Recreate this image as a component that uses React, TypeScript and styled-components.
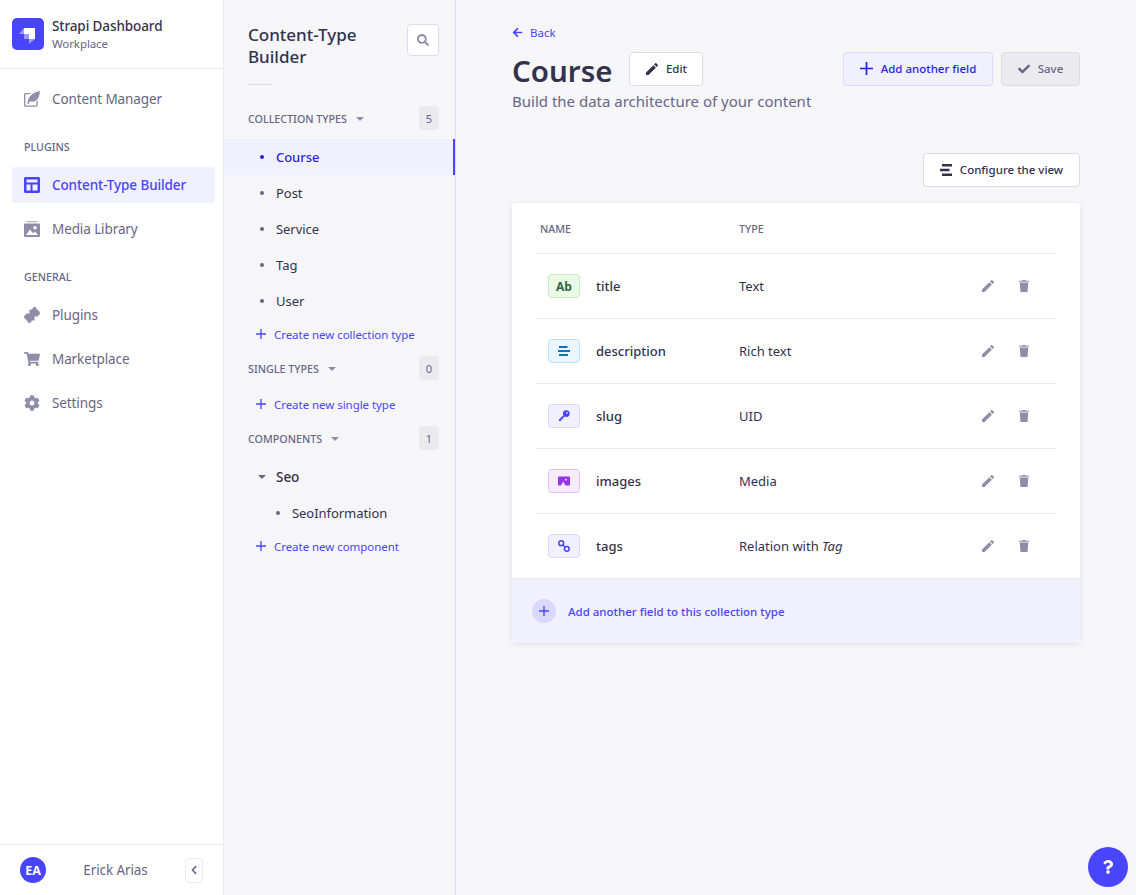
import React from 'react';
import styled, { createGlobalStyle } from 'styled-components';
import {
  FaArrowLeft,
  FaCheck,
  FaChevronLeft,
  FaCog,
  FaQuestion,
  FaSearch,
  FaShoppingCart,
} from 'react-icons/fa';

const theme = {
  primary: '#4945ff',
  primaryDark: '#271fe0',
  primaryLight: '#f0f0ff',
  border: '#dcdce4',
  line: '#eaeaef',
  bg: '#f6f6f9',
  text: '#32324d',
  muted: '#666687',
  icon: '#8e8ea9',
};

const GlobalStyle = createGlobalStyle`
  html, body {
    margin: 0;
    padding: 0;
    background: ${theme.bg};
  }
  * {
    box-sizing: border-box;
  }
  body {
    font-family: "Noto Sans", "Open Sans", sans-serif;
    color: ${theme.text};
  }
`;

const Page = styled.div`
  display: flex;
  height: 895px;
  overflow: hidden;
`;

const MainNav = styled.nav`
  width: 224px;
  flex-shrink: 0;
  display: flex;
  flex-direction: column;
  background: #fff;
  border-right: 1px solid ${theme.line};
`;

const Brand = styled.div`
  height: 69px;
  display: flex;
  align-items: center;
  gap: 8px;
  padding: 0 12px;
  border-bottom: 1px solid ${theme.line};
`;

const BrandName = styled.div`
  font-size: 13.5px;
  font-weight: 500;
  line-height: 18px;
  letter-spacing: -0.1px;
`;

const BrandSub = styled.div`
  font-size: 11.5px;
  line-height: 17px;
  color: ${theme.muted};
  letter-spacing: -0.1px;
`;

const NavBody = styled.div`
  flex: 1;
  padding: 12px 8px 0 12px;
`;

const NavLabel = styled.div`
  height: 16px;
  line-height: 16px;
  margin: 22px 0 12px 12px;
  font-size: 10.7px;
  font-weight: 500;
  color: ${theme.muted};
`;

const NavItem = styled.div<{ $active?: boolean }>`
  height: 36px;
  display: flex;
  align-items: center;
  gap: 12px;
  padding: 0 12px;
  margin-bottom: 8px;
  border-radius: 4px;
  font-size: 13.5px;
  letter-spacing: -0.1px;
  font-weight: ${(p) => (p.$active ? 500 : 400)};
  color: ${(p) => (p.$active ? theme.primary : theme.muted)};
  background: ${(p) => (p.$active ? theme.primaryLight : 'transparent')};
  svg {
    width: 16px;
    height: 16px;
    flex-shrink: 0;
    color: ${(p) => (p.$active ? theme.primary : theme.icon)};
  }
`;

const NavFooter = styled.div`
  height: 51px;
  display: flex;
  align-items: center;
  padding: 0 20px;
  border-top: 1px solid ${theme.line};
`;

const Avatar = styled.div`
  width: 26px;
  height: 26px;
  border-radius: 50%;
  background: ${theme.primary};
  color: #fff;
  display: flex;
  align-items: center;
  justify-content: center;
  font-size: 12.5px;
  font-weight: 700;
`;

const UserName = styled.div`
  flex: 1;
  text-align: center;
  font-size: 13.5px;
  letter-spacing: -0.1px;
  color: ${theme.muted};
`;

const CollapseButton = styled.button`
  width: 18px;
  height: 25px;
  padding: 0;
  display: flex;
  align-items: center;
  justify-content: center;
  background: #fff;
  border: 1px solid ${theme.line};
  border-radius: 4px;
  color: ${theme.muted};
  svg {
    width: 10px;
    height: 10px;
  }
`;

const SubNav = styled.aside`
  width: 232px;
  flex-shrink: 0;
  background: ${theme.bg};
  border-right: 1px solid ${theme.border};
`;

const SubNavHead = styled.div`
  display: flex;
  justify-content: space-between;
  align-items: flex-start;
  padding: 24px 16px 0 24px;
`;

const SubNavTitle = styled.h2`
  margin: 0;
  font-size: 17px;
  line-height: 22px;
  font-weight: 500;
`;

const IconButton = styled.button`
  width: 32px;
  height: 32px;
  padding: 0;
  display: flex;
  align-items: center;
  justify-content: center;
  background: #fff;
  border: 1px solid ${theme.border};
  border-radius: 4px;
  color: ${theme.icon};
  svg {
    width: 12px;
    height: 12px;
  }
`;

const Divider = styled.div`
  width: 24px;
  height: 1px;
  background: ${theme.border};
  margin: 16px 0 21px 24px;
`;

const SectionHead = styled.div`
  height: 24px;
  display: flex;
  align-items: center;
  justify-content: space-between;
  padding: 0 16px 0 24px;
  margin-bottom: 9px;
`;

const SectionTitle = styled.div`
  display: flex;
  align-items: center;
  gap: 9px;
  padding-top: 1px;
  font-size: 10.7px;
  font-weight: 500;
  color: ${theme.muted};
`;

const Caret = styled.span<{ $dark?: boolean }>`
  width: 0;
  height: 0;
  border-left: 4px solid transparent;
  border-right: 4px solid transparent;
  border-top: 4px solid ${(p) => (p.$dark ? theme.muted : theme.icon)};
`;

const CountBadge = styled.div`
  width: 20px;
  height: 24px;
  display: flex;
  align-items: center;
  justify-content: center;
  border-radius: 4px;
  background: ${theme.line};
  color: ${theme.muted};
  font-size: 11px;
`;

const SubItem = styled.div<{ $active?: boolean; $nested?: boolean }>`
  height: 36px;
  display: flex;
  align-items: center;
  gap: 12px;
  padding-left: ${(p) => (p.$nested ? '52px' : '36px')};
  font-size: 13px;
  letter-spacing: -0.05px;
  font-weight: ${(p) => (p.$active ? 500 : 400)};
  color: ${(p) => (p.$active ? theme.primaryDark : theme.text)};
  background: ${(p) => (p.$active ? theme.primaryLight : 'transparent')};
  border-right: 2px solid ${(p) => (p.$active ? theme.primary : 'transparent')};
`;

const Dot = styled.span<{ $active?: boolean }>`
  width: 4px;
  height: 4px;
  border-radius: 50%;
  background: ${(p) => (p.$active ? theme.primaryDark : theme.muted)};
`;

const GroupItem = styled(SubItem)`
  padding-left: 34px;
  gap: 10px;
  font-size: 13.5px;
  font-weight: 500;
`;

const CreateLink = styled.div`
  height: 30px;
  display: flex;
  align-items: center;
  gap: 8px;
  padding-left: 32px;
  margin-bottom: 7px;
  font-size: 11.5px;
  letter-spacing: -0.05px;
  color: ${theme.primary};
  svg {
    width: 10px;
    height: 10px;
  }
`;

const Content = styled.main`
  flex: 1;
  min-width: 0;
  padding: 24px 56px 0;
`;

const BackLink = styled.div`
  height: 18px;
  display: flex;
  align-items: center;
  gap: 7px;
  padding-bottom: 2px;
  font-size: 11.5px;
  color: ${theme.primary};
  svg {
    width: 11px;
    height: 11px;
  }
`;

const HeaderRow = styled.div`
  display: flex;
  align-items: flex-start;
  justify-content: space-between;
  margin-top: 10px;
`;

const TitleRow = styled.div`
  display: flex;
  align-items: flex-start;
  gap: 17px;
`;

const PageTitle = styled.h1`
  margin: 0;
  font-size: 29.500px;
  line-height: 38px;
  font-weight: 600;
`;

const Actions = styled.div`
  display: flex;
  gap: 8px;
`;

const Button = styled.button<{ $variant?: 'default' | 'primary' | 'disabled'; $width: number }>`
  width: ${(p) => p.$width}px;
  height: 34px;
  display: flex;
  align-items: center;
  justify-content: center;
  gap: 8px;
  padding: 0 0 1px;
  border-radius: 4px;
  font-family: inherit;
  font-size: 11.5px;
  font-weight: 500;
  border: 1px solid ${(p) => (p.$variant === 'primary' ? '#d9d8ff' : theme.border)};
  background: ${(p) =>
    p.$variant === 'primary' ? theme.primaryLight : p.$variant === 'disabled' ? theme.line : '#fff'};
  color: ${(p) =>
    p.$variant === 'primary' ? theme.primaryDark : p.$variant === 'disabled' ? theme.muted : theme.text};
  svg {
    width: ${(p) => (p.$variant === 'primary' ? 13 : 12)}px;
    height: ${(p) => (p.$variant === 'primary' ? 13 : 12)}px;
    flex-shrink: 0;
  }
`;

const Subtitle = styled.div`
  font-size: 15px;
  line-height: 22px;
  color: ${theme.muted};
`;

const ConfigRow = styled.div`
  display: flex;
  justify-content: flex-end;
  margin-top: 41px;
`;

const Card = styled.section`
  margin-top: 16px;
  background: #fff;
  border-radius: 4px;
  overflow: hidden;
  box-shadow: 0 1px 4px rgba(33, 33, 52, 0.1);
`;

const TableBody = styled.div`
  padding: 0 24px;
`;

const HeadRow = styled.div`
  height: 51px;
  display: grid;
  grid-template-columns: 199px 1fr;
  align-items: center;
  padding: 2px 0 0 4px;
  border-bottom: 1px solid ${theme.line};
  font-size: 10.7px;
  font-weight: 500;
  color: ${theme.muted};
`;

const FieldRow = styled.div`
  height: 65px;
  display: grid;
  grid-template-columns: 32px 16px 139px 1fr auto;
  align-items: center;
  padding-left: 12px;
  padding-right: 27px;
  border-bottom: 1px solid ${theme.line};
  &:last-child {
    border-bottom: none;
    height: 64px;
  }
`;

const FieldBadge = styled.div<{ $bg: string; $border: string; $color: string }>`
  width: 32px;
  height: 24px;
  display: flex;
  align-items: center;
  justify-content: center;
  border-radius: 4px;
  background: ${(p) => p.$bg};
  border: 1px solid ${(p) => p.$border};
  color: ${(p) => p.$color};
  font-size: 12px;
  font-weight: 700;
  svg {
    width: 12px;
    height: 12px;
  }
`;

const FieldName = styled.div`
  grid-column: 3;
  font-size: 13px;
  font-weight: 500;
`;

const FieldType = styled.div`
  padding-left: 4px;
  font-size: 13px;
  em {
    font-style: italic;
  }
`;

const RowActions = styled.div`
  display: flex;
  gap: 25px;
  color: ${theme.icon};
  svg {
    height: 12px;
    display: block;
  }
`;

const AddRow = styled.div`
  height: 65px;
  display: flex;
  align-items: center;
  gap: 12px;
  padding-left: 20px;
  background: ${theme.primaryLight};
  border-top: 1px solid ${theme.line};
  font-size: 11.5px;
  font-weight: 500;
  color: ${theme.primary};
`;

const AddCircle = styled.span`
  width: 24px;
  height: 24px;
  border-radius: 50%;
  display: flex;
  align-items: center;
  justify-content: center;
  background: #d9d8ff;
  svg {
    width: 10px;
    height: 10px;
  }
`;

const HelpButton = styled.button`
  position: fixed;
  right: 8px;
  bottom: 8px;
  width: 40px;
  height: 40px;
  padding: 0;
  border: none;
  border-radius: 50%;
  display: flex;
  align-items: center;
  justify-content: center;
  background: ${theme.primary};
  color: #fff;
  svg {
    width: 14px;
    height: 14px;
  }
`;

const LogoIcon = () => (
  <svg width="32" height="32" viewBox="0 0 32 32" style={{ flexShrink: 0 }}>
    <rect width="32" height="32" rx="5" fill="#4945ff" />
    <path d="M12 10h11v11h-6v-5h-5z" fill="#fff" />
    <path d="M12 10v6H7z" fill="#fff" opacity="0.45" />
    <path d="M17 21h6l-6 5z" fill="#fff" opacity="0.45" />
    <path d="M12 16h5v5h-5z" fill="#fff" opacity="0.45" />
  </svg>
);

const ManagerIcon = () => (
  <svg viewBox="0 0 16 16" fill="currentColor">
    <path d="M0 3.500C0 2.700.7 2 1.500 2H7L5.800 3.300H1.500c-.1 0-.2.1-.2.2v10.700c0 .1.1.2.2.2h10.700c.1 0 .2-.1.2-.2V10h1.300v4.200c0 .8-.7 1.500-1.500 1.500H1.500c-.8 0-1.500-.7-1.500-1.500z" />
    <path d="M16 0s-.2 4.500-2 7.500c-1.400 2.300-3.700 3.500-6.500 3H5.800L4.500 13H3.300C4 7.500 6.500 1.500 16 0z" />
  </svg>
);

const LayoutIcon = () => (
  <svg viewBox="0 0 16 16" fill="currentColor">
    <path
      fillRule="evenodd"
      d="M1.500 0h13C15.300 0 16 .7 16 1.500v13c0 .8-.7 1.500-1.500 1.500h-13C.7 16 0 15.300 0 14.500v-13C0 .7.700 0 1.500 0zM2.500 2.500v3h11v-3zM2.500 7.500v6h4v-6zM8.500 7.500v6h5v-6z"
    />
  </svg>
);

const MediaIcon = () => (
  <svg viewBox="0 0 16 16" fill="currentColor">
    <path d="M2.500 0h11v1.200h-11z" opacity="0.7" />
    <path
      fillRule="evenodd"
      d="M1 2.500h14c.5 0 1 .5 1 1V15c0 .5-.5 1-1 1H1c-.5 0-1-.5-1-1V3.500c0-.5.5-1 1-1zM11 5a1.700 1.700 0 100 3.400A1.700 1.700 0 0011 5zM2 14h12l-3-3.500-2 1.800-3-3.800z"
    />
  </svg>
);

const PuzzleIcon = () => (
  <svg viewBox="0 0 16 16" fill="currentColor">
    <rect x="5.500" y="2.500" width="8.500" height="7" />
    <rect x="2" y="6.500" width="8.500" height="7" />
    <circle cx="10.500" cy="2.200" r="2.200" />
    <circle cx="13.800" cy="6" r="2.200" />
    <circle cx="2.200" cy="10" r="2.200" />
    <circle cx="5.500" cy="13.800" r="2.200" />
  </svg>
);

const PlusIcon = () => (
  <svg viewBox="0 0 12 12" fill="currentColor">
    <path d="M5.200 0h1.600v5.200H12v1.600H6.800V12H5.200V6.800H0V5.200h5.200z" />
  </svg>
);

const EditIcon = () => (
  <svg viewBox="3 3 18 18" fill="currentColor" width="12">
    <path d="M3 17.250V21h3.750L17.810 9.940l-3.750-3.750L3 17.250zM20.710 7.040c.39-.39.39-1.020 0-1.410l-2.340-2.340c-.39-.39-1.020-.39-1.410 0l-1.830 1.830 3.750 3.750 1.830-1.830z" />
  </svg>
);

const TrashIcon = () => (
  <svg viewBox="0 0 10 12" fill="currentColor" width="10">
    <path d="M3.500 0h3l.4.7H10v1.100H0V.7h3.100z" />
    <path d="M.7 2.600h8.600L8.500 12h-7z" />
  </svg>
);

const LinesIcon = () => (
  <svg viewBox="0 0 12 12" fill="currentColor">
    <path d="M1 1h8.500v2H1zM0 5h12v2H0zM1 9h9v2H1z" />
  </svg>
);

const ConfigIcon = () => (
  <svg viewBox="0 0 12 12" fill="currentColor">
    <path d="M2 0h10v2.400H2zM0 4.800h9.500v2.400H0zM2 9.600h10V12H2z" />
  </svg>
);

const KeyIcon = () => (
  <svg viewBox="0 0 12 12" fill="currentColor">
    <path
      fillRule="evenodd"
      d="M8.300.2a3.400 3.400 0 110 6.800 3.400 3.400 0 010-6.800zm.6 1.700a.9.9 0 100 1.800.9.9 0 000-1.800z"
    />
    <path d="M5.300 5.200l1.300 1.300-4.600 5L.5 10z" />
  </svg>
);

const PictureIcon = () => (
  <svg viewBox="0 0 12 9" fill="currentColor">
    <path
      fillRule="evenodd"
      d="M.8 0h10.400c.5 0 .8.3.8.8v7.400c0 .5-.3.8-.8.8H.8C.3 9 0 8.700 0 8.200V.8C0 .3.300 0 .8 0zM7.800 2.300a.9.9 0 100 1.800.9.9 0 000-1.800zM3 9h4.500L5.200 5z"
    />
  </svg>
);

const ChainIcon = () => (
  <svg viewBox="0 0 12 12" fill="none" stroke="currentColor" strokeWidth="1.500">
    <circle cx="3.200" cy="3.200" r="2.400" />
    <circle cx="8.800" cy="8.800" r="2.400" />
    <path d="M4.800 4.800l2.400 2.400" />
  </svg>
);

type Field = {
  name: string;
  type: string;
  bg: string;
  border: string;
  color: string;
  icon: React.ReactNode;
  target?: string;
};

const fields: Field[] = [
  { name: 'title', type: 'Text', bg: '#eafbe7', border: '#c6f0c2', color: '#2f6846', icon: 'Ab' },
  { name: 'description', type: 'Rich text', bg: '#eaf5ff', border: '#b8e1ff', color: '#0c75af', icon: <LinesIcon /> },
  { name: 'slug', type: 'UID', bg: '#f0f0ff', border: '#d9d8ff', color: '#4945ff', icon: <KeyIcon /> },
  { name: 'images', type: 'Media', bg: '#f6ecfc', border: '#e0c1f4', color: '#9736e8', icon: <PictureIcon /> },
  { name: 'tags', type: 'Relation with', bg: '#f0f0ff', border: '#d9d8ff', color: '#4945ff', icon: <ChainIcon />, target: 'Tag' },
];

const App: React.FC = () => {
  return (
    <Page>
      <GlobalStyle />
      <MainNav>
        <Brand>
          <LogoIcon />
          <div>
            <BrandName>Strapi Dashboard</BrandName>
            <BrandSub>Workplace</BrandSub>
          </div>
        </Brand>
        <NavBody>
          <NavItem><ManagerIcon />Content Manager</NavItem>
          <NavLabel>PLUGINS</NavLabel>
          <NavItem $active><LayoutIcon />Content-Type Builder</NavItem>
          <NavItem><MediaIcon />Media Library</NavItem>
          <NavLabel>GENERAL</NavLabel>
          <NavItem><PuzzleIcon />Plugins</NavItem>
          <NavItem><FaShoppingCart />Marketplace</NavItem>
          <NavItem><FaCog />Settings</NavItem>
        </NavBody>
        <NavFooter>
          <Avatar>EA</Avatar>
          <UserName>Erick Arias</UserName>
          <CollapseButton><FaChevronLeft /></CollapseButton>
        </NavFooter>
      </MainNav>

      <SubNav>
        <SubNavHead>
          <SubNavTitle>Content-Type<br />Builder</SubNavTitle>
          <IconButton><FaSearch /></IconButton>
        </SubNavHead>
        <Divider />
        <SectionHead>
          <SectionTitle>COLLECTION TYPES <Caret /></SectionTitle>
          <CountBadge>5</CountBadge>
        </SectionHead>
        <SubItem $active><Dot $active />Course</SubItem>
        <SubItem><Dot />Post</SubItem>
        <SubItem><Dot />Service</SubItem>
        <SubItem><Dot />Tag</SubItem>
        <SubItem><Dot />User</SubItem>
        <CreateLink><PlusIcon />Create new collection type</CreateLink>
        <SectionHead>
          <SectionTitle>SINGLE TYPES <Caret /></SectionTitle>
          <CountBadge>0</CountBadge>
        </SectionHead>
        <CreateLink><PlusIcon />Create new single type</CreateLink>
        <SectionHead>
          <SectionTitle>COMPONENTS <Caret /></SectionTitle>
          <CountBadge>1</CountBadge>
        </SectionHead>
        <GroupItem><Caret $dark />Seo</GroupItem>
        <SubItem $nested><Dot />SeoInformation</SubItem>
        <CreateLink><PlusIcon />Create new component</CreateLink>
      </SubNav>

      <Content>
        <BackLink><FaArrowLeft />Back</BackLink>
        <HeaderRow>
          <TitleRow>
            <PageTitle>Course</PageTitle>
            <Button $width={74}><EditIcon />Edit</Button>
          </TitleRow>
          <Actions>
            <Button $variant="primary" $width={150}><PlusIcon />Add another field</Button>
            <Button $variant="disabled" $width={79}><FaCheck />Save</Button>
          </Actions>
        </HeaderRow>
        <Subtitle>Build the data architecture of your content</Subtitle>
        <ConfigRow>
          <Button $width={157}><ConfigIcon />Configure the view</Button>
        </ConfigRow>
        <Card>
          <TableBody>
            <HeadRow>
              <span>NAME</span>
              <span>TYPE</span>
            </HeadRow>
            {fields.map((field) => (
              <FieldRow key={field.name}>
                <FieldBadge $bg={field.bg} $border={field.border} $color={field.color}>
                  {field.icon}
                </FieldBadge>
                <FieldName>{field.name}</FieldName>
                <FieldType>
                  {field.type}
                  {field.target && <> <em>{field.target}</em></>}
                </FieldType>
                <RowActions>
                  <EditIcon />
                  <TrashIcon />
                </RowActions>
              </FieldRow>
            ))}
          </TableBody>
          <AddRow>
            <AddCircle><PlusIcon /></AddCircle>
            Add another field to this collection type
          </AddRow>
        </Card>
      </Content>
      <HelpButton><FaQuestion /></HelpButton>
    </Page>
  );
};

export default App;
